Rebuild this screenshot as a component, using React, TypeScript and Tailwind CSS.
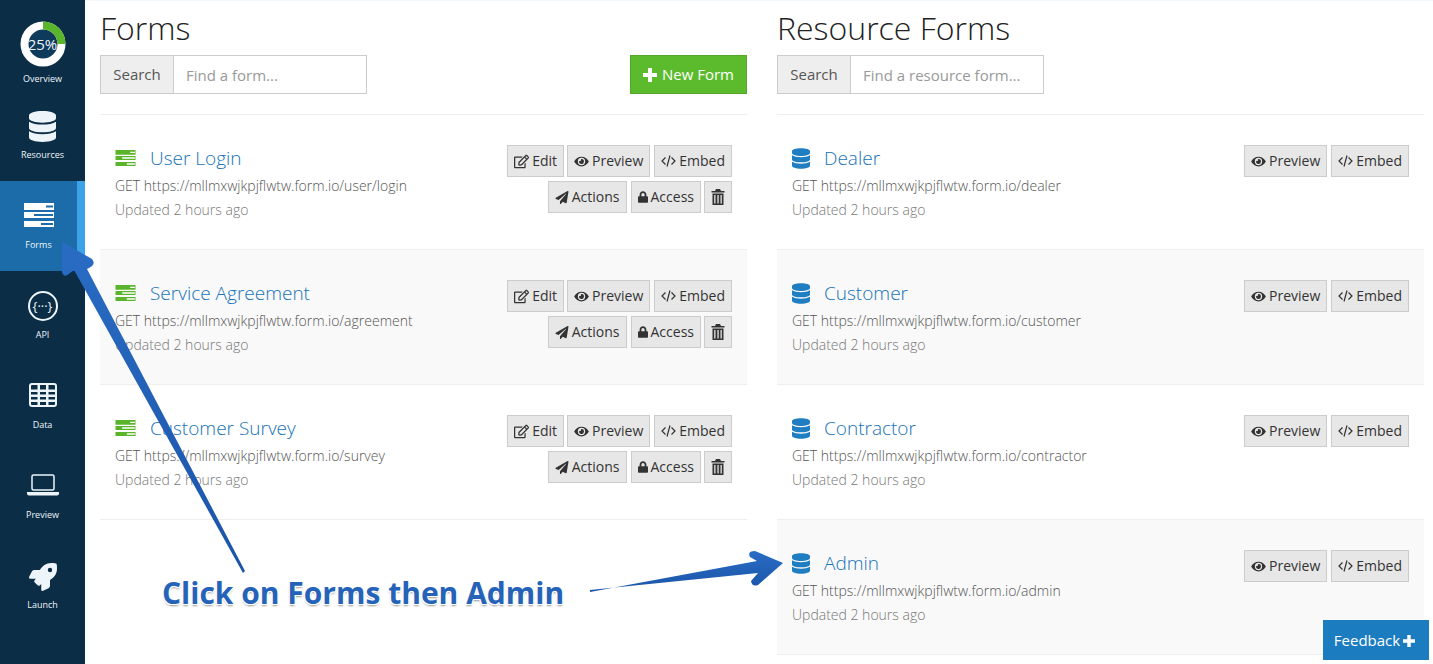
import { FaDatabase, FaEye, FaLock, FaPaperPlane, FaRegEdit, FaRocket } from "react-icons/fa";
import type { ReactNode } from "react";

const FONT = "font-['Open_Sans',sans-serif]";

function TasksIcon({ className, bar }: { className: string; bar: string }) {
  return (
    <svg viewBox="0 0 30 24" className={className}>
      <path fill="currentColor" d="M0 0h30v7H0zM0 9h30v6H0zM0 18h30v6H0z" />
      <path fill={bar} d="M22 2.500h7v2h-7zM10 11h19v2H10zM17 20h12v2H17z" />
    </svg>
  );
}

function PlusIcon({ className }: { className: string }) {
  return (
    <svg viewBox="0 0 14 14" className={className}>
      <path fill="currentColor" d="M5 0h4v5h5v4H9v5H5V9H0V5h5z" />
    </svg>
  );
}

function CodeIcon() {
  return (
    <svg viewBox="0 0 15 12" className="h-[12px] w-[15px]" fill="none" stroke="currentColor" strokeWidth="1.200">
      <path d="M4.500 2.500 1 6l3.500 3.500M10.500 2.500 14 6l-3.500 3.500M9 0.500 6 11.500" />
    </svg>
  );
}

function TrashIcon() {
  return (
    <svg viewBox="0 0 13 16" className="h-[16px] w-[14px]">
      <path
        fill="currentColor"
        d="M4.500 0h4l1 2H13v1.500H0V2h3.500zM1 4.500h11V16H1zM2.700 6v8.500h1.300V6zM5.900 6v8.500h1.300V6zM9 6v8.500h1.300V6z"
        fillRule="evenodd"
      />
    </svg>
  );
}

function TableIcon() {
  return (
    <svg viewBox="0 0 28 24" className="h-[24px] w-[28px]">
      <rect x="1" y="1" width="26" height="22" rx="2" fill="none" stroke="currentColor" strokeWidth="2" />
      <path fill="currentColor" d="M0 6.500h28v2.500H0zM0 11.500h28v2.500H0zM0 16.500h28v2.500H0zM8.500 1h2.500v22H8.500zM17 1h2.500v22H17z" />
    </svg>
  );
}

function LaptopIcon() {
  return (
    <svg viewBox="0 0 32 22" className="h-[22px] w-[32px]">
      <rect x="5" y="1" width="22" height="15" rx="1.500" fill="none" stroke="currentColor" strokeWidth="1.500" />
      <path fill="currentColor" d="M0 18h32v1.500q0 2-2 2H2q-2 0-2-2z" />
    </svg>
  );
}

function SideItem({ icon, label, active, nudge }: { icon: ReactNode; label: string; active?: boolean; nudge?: string }) {
  return (
    <div className={"flex h-[90px] flex-col items-center pt-[17px] text-[#eef5fa] " + (active ? "border-r-8 border-[#3da3e8] bg-[#1b6ca8]" : "")}>
      <div className={"flex h-[34px] items-center justify-center " + (nudge ?? "")}>{icon}</div>
      <span className="mt-[7px] text-[9px] leading-[12px] font-medium">{label}</span>
    </div>
  );
}

function Sidebar() {
  return (
    <div className="flex h-[664px] w-[85px] shrink-0 flex-col bg-[#0b2d46]">
      <div className="flex h-[91px] flex-col items-center pt-[21px] text-[#eef5fa]">
        <div className="relative flex h-[46px] w-[46px] items-center justify-center">
          <svg viewBox="0 0 46 46" className="absolute inset-0 h-full w-full">
            <circle cx="23" cy="23" r="18.500" fill="#0e3a5c" stroke="#ffffff" strokeWidth="8" />
            <path d="M23 4.500 A18.500 18.500 0 0 1 41.500 23" fill="none" stroke="#5bb52c" strokeWidth="8" />
          </svg>
          <span className="relative text-[15px] leading-none">25%</span>
        </div>
        <span className="mt-[6px] text-[9px] leading-[12px] font-medium">Overview</span>
      </div>
      <SideItem nudge="translate-y-[1px]" icon={<FaDatabase className="h-[31px] w-[27px]" />} label="Resources" />
      <SideItem active icon={<TasksIcon className="h-[24px] w-[30px] text-white" bar="#1b6ca8" />} label="Forms" />
      <SideItem
        nudge="translate-y-[1px]"
        icon={
          <div className="flex h-[30px] w-[30px] items-center justify-center rounded-full border-2 border-[#eef5fa] text-[13px] leading-none">
            {"{···}"}
          </div>
        }
        label="API"
      />
      <SideItem icon={<TableIcon />} label="Data" />
      <SideItem icon={<LaptopIcon />} label="Preview" />
      <SideItem nudge="translate-y-[2px]" icon={<FaRocket className="h-[28px] w-[28px]" />} label="Launch" />
    </div>
  );
}

function Btn({ icon, label, className }: { icon: ReactNode; label?: string; className?: string }) {
  return (
    <button className={"flex h-[32px] items-center gap-[3px] border border-[#cccccc] bg-[#e7e7e7] px-[6px] text-[14px] leading-none text-[#333333] " + (className ?? "")}>
      {icon}
      {label}
    </button>
  );
}

const editBtn = <Btn className="-mr-[1px]" icon={<FaRegEdit className="h-[15px] w-[15px]" />} label="Edit" />;
const previewBtn = <Btn icon={<FaEye className="h-[13px] w-[15px]" />} label="Preview" />;
const embedBtn = <Btn icon={<CodeIcon />} label="Embed" />;

function Row({ icon, title, url, striped, formRow, iconWidth }: { icon: ReactNode; title: string; url: string; striped?: boolean; formRow?: boolean; iconWidth: string }) {
  return (
    <div className={"flex h-[135px] justify-between border-b border-[#eeeeee] pr-[15px] pl-[15px] " + (striped ? "bg-[#f9f9f9]" : "")}>
      <div className="pt-[28px]">
        <div className="flex h-[30px] items-center text-[19px] font-light text-[#1673b8]">
          <div className={"flex items-center " + iconWidth}>{icon}</div>
          {title}
        </div>
        <div className="mt-[1px] text-[14px] leading-[24px] font-light text-[#555555]">GET {url}</div>
        <div className="text-[14px] leading-[24px] font-light text-[#777777]">Updated 2 hours ago</div>
      </div>
      <div className="flex flex-col items-end gap-[4px] pt-[30px]">
        <div className="flex gap-[4px]">
          {formRow && editBtn}
          {previewBtn}
          {embedBtn}
        </div>
        {formRow && (
          <div className="flex gap-[4px]">
            <Btn icon={<FaPaperPlane className="h-[13px] w-[14px]" />} label="Actions" />
            <Btn icon={<FaLock className="h-[12px] w-[10px]" />} label="Access" />
            <Btn className="-ml-[1px]" icon={<TrashIcon />} />
          </div>
        )}
      </div>
    </div>
  );
}

function SearchBox({ placeholder }: { placeholder: string }) {
  return (
    <div className="flex h-[39px] w-[267px] border border-[#cccccc] text-[15px]">
      <div className="flex w-[73px] items-center justify-center border-r border-[#cccccc] bg-[#eeeeee] text-[#555555]">Search</div>
      <div className="flex flex-1 items-center pt-[1px] pl-[12px] text-[#999999]">{placeholder}</div>
    </div>
  );
}

const formIcon = <TasksIcon className="h-[16px] w-[21px] text-[#5bb52c]" bar="#ffffff" />;
const dbIcon = <FaDatabase className="h-[21px] w-[18px] text-[#1f7dc1]" />;

export default function App() {
  return (
    <div className={"relative flex h-[664px] w-[1433px] overflow-hidden bg-white " + FONT}>
      <Sidebar />
      <div className="flex flex-1 gap-[30px] border-t border-[#f3f8fc] pl-[15px]">
        <div className="w-[647px]">
          <h1 className="h-[54px] pt-[4px] text-[32px] leading-[46px] font-light text-[#222222]">Forms</h1>
          <div className="flex h-[60px] items-start justify-between border-b border-[#eeeeee]">
            <SearchBox placeholder="Find a form..." />
            <button className="flex h-[39px] w-[117px] items-center justify-center gap-[5px] border border-[#54a829] bg-[#5cbb2d] text-[15px] font-medium text-white">
              <PlusIcon className="h-[14px] w-[14px]" />
              New Form
            </button>
          </div>
          <Row formRow iconWidth="w-[35px]" icon={formIcon} title="User Login" url="https://mllmxwjkpjflwtw.form.io/user/login" />
          <Row formRow striped iconWidth="w-[35px]" icon={formIcon} title="Service Agreement" url="https://mllmxwjkpjflwtw.form.io/agreement" />
          <Row formRow iconWidth="w-[35px]" icon={formIcon} title="Customer Survey" url="https://mllmxwjkpjflwtw.form.io/survey" />
        </div>
        <div className="w-[647px]">
          <h1 className="h-[54px] pt-[4px] text-[32px] leading-[46px] font-light text-[#222222]">Resource Forms</h1>
          <div className="h-[60px] border-b border-[#eeeeee]">
            <SearchBox placeholder="Find a resource form..." />
          </div>
          <Row iconWidth="w-[32px]" icon={dbIcon} title="Dealer" url="https://mllmxwjkpjflwtw.form.io/dealer" />
          <Row striped iconWidth="w-[32px]" icon={dbIcon} title="Customer" url="https://mllmxwjkpjflwtw.form.io/customer" />
          <Row iconWidth="w-[32px]" icon={dbIcon} title="Contractor" url="https://mllmxwjkpjflwtw.form.io/contractor" />
          <Row striped iconWidth="w-[32px]" icon={dbIcon} title="Admin" url="https://mllmxwjkpjflwtw.form.io/admin" />
        </div>
      </div>

      {/* annotation arrows drawn over the page */}
      <svg viewBox="0 0 1433 664" className="pointer-events-none absolute inset-0 h-[664px] w-[1433px]">
        <defs>
          <linearGradient id="arrowBlue" x1="0" y1="0" x2="0" y2="1">
            <stop offset="0" stopColor="#2a6cc4" />
            <stop offset="1" stopColor="#1a54a8" />
          </linearGradient>
        </defs>
        <path
          fill="url(#arrowBlue)"
          d="M245 571 L87 269 Q 97 265 92 259 L64 243 Q 62 241 62 246 L62 272 Q 64 279 70 273 L74 270 L243 573 Z"
        />
        <path
          fill="url(#arrowBlue)"
          d="M590 590 L758 573 L751 581 Q 752 587 758 585 L783 563 L755 551 Q 747 551 750 557 L757 561 L590 592 Z"
        />
      </svg>
      <div className="absolute top-[572px] left-[162px] text-[30px] leading-[42px] font-bold text-[#2563b8] [text-shadow:0_1px_0_#fff,1px_0_0_#fff,-1px_0_0_#fff,0_-1px_0_#fff,1px_1px_0_#fff,-1px_1px_0_#fff,0_2px_2px_#999]">
        Click on Forms then Admin
      </div>
      <div className="absolute top-[620px] left-[1323px] flex h-[40px] w-[106px] items-center justify-center gap-[3px] bg-[#1c7cc0] pt-[1px] pr-[3px] text-[15px] text-white">
        Feedback
        <PlusIcon className="h-[12px] w-[12px]" />
      </div>
    </div>
  );
}
